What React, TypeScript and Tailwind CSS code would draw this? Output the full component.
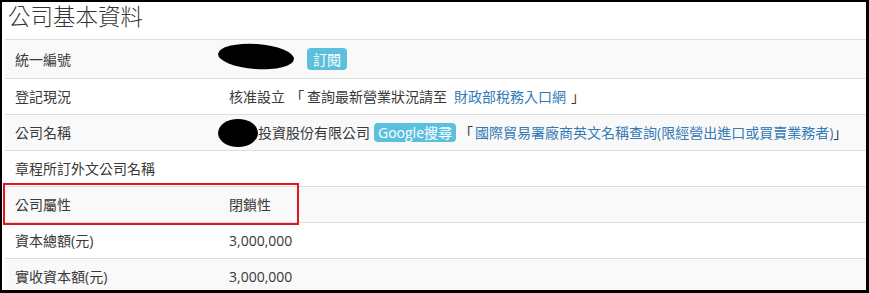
import React from "react";

const font = "font-['Open_Sans','Noto_Sans_CJK_TC',sans-serif]";

function Row({
  label,
  children,
  striped,
  h = "h-[36px]",
}: {
  label: string;
  children?: React.ReactNode;
  striped?: boolean;
  h?: string;
}) {
  return (
    <div
      className={`flex items-center border-t border-[#dddddd] ${h} ${
        striped ? "bg-[#f9f9f9]" : "bg-white"
      }`}
    >
      <div className="w-[216px] shrink-0 pl-[10px] text-[14px] text-[#383838] whitespace-nowrap">
        {label}
      </div>
      <div className="flex items-center pl-[8px] text-[14px] text-[#383838] whitespace-nowrap">
        {children}
      </div>
    </div>
  );
}

export default function App() {
  return (
    <div
      className={`relative w-[869px] h-[293px] bg-black pt-[2px] pl-[2px] pr-[3px] pb-[3px] ${font}`}
    >
      <div className="w-full h-full bg-white overflow-hidden">
        <div className="h-[37px] pl-[6px] pt-[2px]">
          <div className="text-[22.5px] leading-[26px] font-light text-[#333333]">公司基本資料</div>
        </div>
        <div className="ml-[3px]">
          <Row label="統一編號" striped h="h-[39px]">
            <span className="inline-block ml-[-11px] w-[76px] h-[25px] rounded-[50%] bg-black rotate-[4deg] -translate-y-[3px]" />
            <span className="ml-[13px] inline-flex items-center h-[22px] px-[6px] rounded-[4px] bg-[#5bc0de] text-white text-[14px]">
              訂閱
            </span>
          </Row>
          <Row label="登記現況">
            <span>核准設立</span>
            <span className="inline-block w-[17px] ml-[5px]">「</span>
            <span>查詢最新營業狀況請至</span>
            <span className="text-[#337ab7] ml-[7px]">財政部稅務入口網</span>
            <span className="ml-[5px]">」</span>
          </Row>
          <Row label="公司名稱" striped>
            <span className="inline-block ml-[-11px] w-[40px] h-[28px] rounded-[50%] bg-black" />
            <span>投資股份有限公司</span>
            <span className="ml-[4px] inline-flex items-center h-[19px] px-[4px] rounded-[4px] bg-[#5bc0de] text-white text-[14px]">
              Google搜尋
            </span>
            <span className="inline-block w-[16px] ml-[3px]">「</span>
            <span className="text-[#337ab7]">
              國際貿易署廠商英文名稱查詢(限經營出進口或買賣業務者)
            </span>
            <span>」</span>
          </Row>
          <Row label="章程所訂外文公司名稱" />
          <Row label="公司屬性" striped>
            <span>閉鎖性</span>
          </Row>
          <Row label="資本總額(元)">
            <span>3,000,000</span>
          </Row>
          <Row label="實收資本額(元)" striped>
            <span>3,000,000</span>
          </Row>
        </div>
      </div>
      <div className="absolute left-[3px] top-[183px] w-[296px] h-[42px] border-2 border-[#e3141c]" />
    </div>
  );
}
